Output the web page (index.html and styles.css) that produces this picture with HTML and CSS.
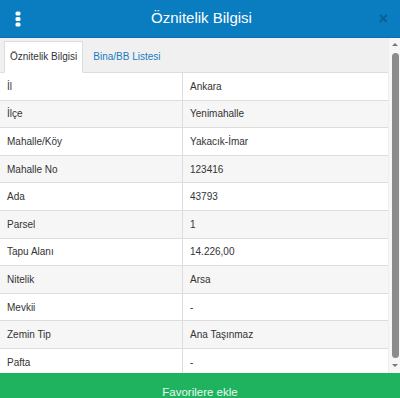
FILE: index.html
```html
<!DOCTYPE html>
<html lang="tr">
<head>
    <meta charset="UTF-8">
    <meta name="viewport" content="width=device-width, initial-scale=1.0">
    <title>Öznitelik Bilgisi</title>
    <link rel="stylesheet" href="styles.css">
</head>
<body>
    <div class="modal">
        <div class="header">
            <span class="menu">
                <svg width="6" height="16" viewBox="0 0 6 16">
                    <rect x="0.5" y="0.5" width="5" height="4" rx="1.5" fill="#fff"/>
                    <rect x="0.5" y="6" width="5" height="4" rx="1.5" fill="#fff"/>
                    <rect x="0.5" y="11.5" width="5" height="4" rx="1.5" fill="#fff"/>
                </svg>
            </span>
            <h1>Öznitelik Bilgisi</h1>
            <span class="close">&times;</span>
        </div>

        <div class="body">
            <div class="content">
                <div class="tabs">
                    <div class="tab active">Öznitelik Bilgisi</div>
                    <div class="tab">Bina/BB Listesi</div>
                </div>
                <table class="info">
                    <tr><td>İl</td><td>Ankara</td></tr>
                    <tr><td>İlçe</td><td>Yenimahalle</td></tr>
                    <tr><td>Mahalle/Köy</td><td>Yakacık-İmar</td></tr>
                    <tr><td>Mahalle No</td><td>123416</td></tr>
                    <tr><td>Ada</td><td>43793</td></tr>
                    <tr><td>Parsel</td><td>1</td></tr>
                    <tr><td>Tapu Alanı</td><td>14.226,00</td></tr>
                    <tr><td>Nitelik</td><td>Arsa</td></tr>
                    <tr><td>Mevkii</td><td>-</td></tr>
                    <tr><td>Zemin Tip</td><td>Ana Taşınmaz</td></tr>
                    <tr><td>Pafta</td><td>-</td></tr>
                </table>
            </div>
            <!-- scrollbar drawn by hand, the headless browser hides the real one -->
            <div class="scrollbar">
                <span class="arrow up"></span>
                <span class="thumb"></span>
                <span class="arrow down"></span>
            </div>
        </div>

        <button class="fav">Favorilere ekle</button>
    </div>
</body>
</html>
```

FILE: styles.css
```css
body {
    margin: 0;
    font-family: "Liberation Sans", Arial, sans-serif;
    color: #333;
    background: #fff;
    overflow: hidden;
}
.modal {
    width: 400px;
    display: flex;
    flex-direction: column;
}
.header {
    height: 37px;
    background: #0a7cc0;
    border-bottom: 1px solid #0a6eab;
    display: flex;
    align-items: center;
    padding: 0 12px 0 15px;
}
.header .menu {
    width: 20px;
    display: flex;
    align-items: center;
}
.header h1 {
    flex: 1;
    margin: 0 0 2px;
    text-align: center;
    color: #fff;
    font-size: 15px;
    font-weight: normal;
}
.header .close {
    width: 20px;
    text-align: right;
    color: #0b5f93;
    font-size: 16px;
    font-weight: bold;
}
.body {
    height: 335px;
    display: flex;
    overflow: hidden;
}
.content {
    flex: 1;
    overflow: hidden;
}
.scrollbar {
    width: 12px;
    background: #f7f7f7;
    border-left: 1px solid #eee;
    display: flex;
    flex-direction: column;
    align-items: center;
    padding: 5px 0 6px;
    box-sizing: border-box;
}
.scrollbar .thumb {
    flex: 1;
    width: 7px;
    margin: 7px 0 6px 1px;
    background: #8c8c8c;
    border-radius: 4px;
}
.scrollbar .arrow {
    width: 0;
    height: 0;
    margin-left: 1px;
    border-left: 3px solid transparent;
    border-right: 3px solid transparent;
}
.scrollbar .up {
    border-bottom: 3px solid #777;
}
.scrollbar .down {
    border-top: 3px solid #777;
}
.tabs {
    display: flex;
    background: #f0f0f0;
    border-bottom: 1px solid #ddd;
    padding: 3px 4px 0;
    font-size: 10px;
}
.tab {
    padding: 9px 5px 10px;
    margin-bottom: -1px;
    color: #1a7cc0;
    border: 1px solid transparent;
}
.tab.active {
    background: #fff;
    color: #333;
    border-color: #ddd;
    border-bottom-color: #fff;
    margin-right: 4px;
}
.info {
    width: 100%;
    border-collapse: collapse;
    font-size: 10px;
}
.info td {
    height: 26.6px;
    padding: 0 7px;
    border-bottom: 1px solid #ddd;
}
.info td:first-child {
    width: 168px;
    border-right: 1px solid #ddd;
}
.info tr:nth-child(even) td {
    background: #f6f6f6;
}
.fav {
    height: 38px;
    border: none;
    background: #1fb35f;
    color: #e9f9ef;
    font-family: "Liberation Sans", Arial, sans-serif;
    font-size: 11.5px;
    padding: 0;
}
```
